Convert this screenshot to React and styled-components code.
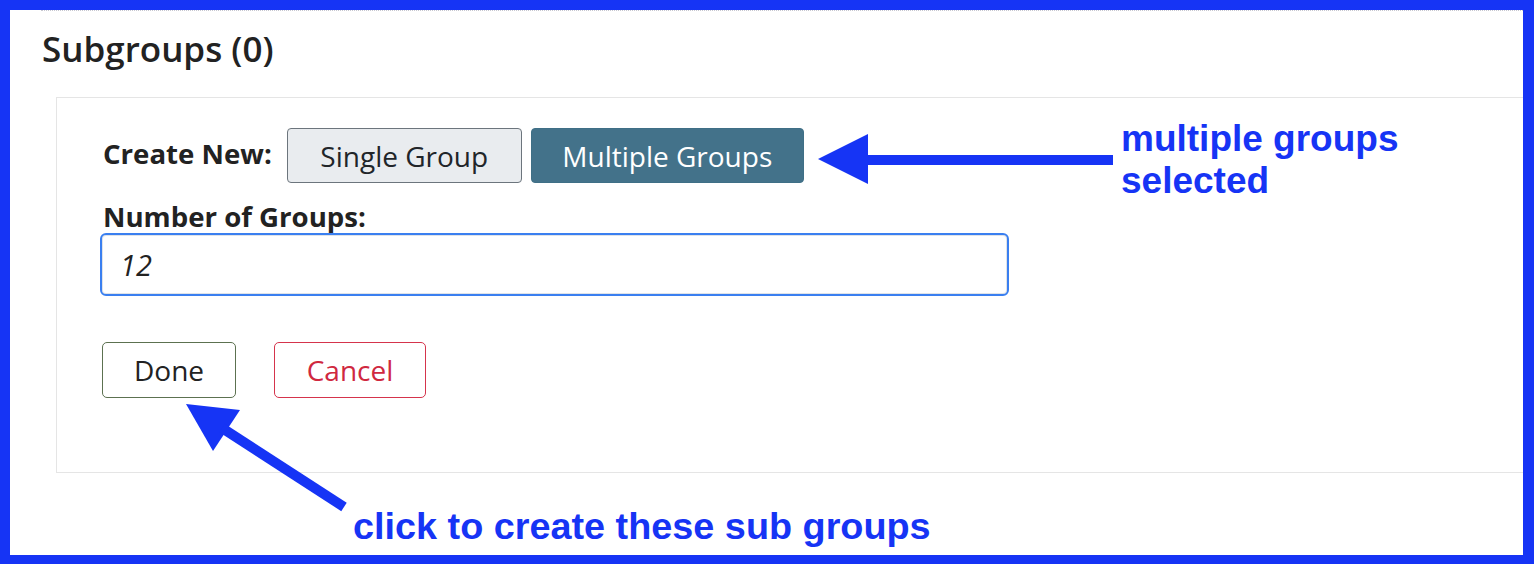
import React from "react";
import styled, { createGlobalStyle } from "styled-components";

const Global = createGlobalStyle`
  html, body { margin: 0; padding: 0; background: #fff; }
  body { font-family: "Open Sans", "Noto Sans", sans-serif; color: #212529; }
`;

const BLUE = "#1634f5";

const Frame = styled.div`
  position: relative;
  width: 1534px;
  height: 564px;
  box-sizing: border-box;
  border: 10px solid ${BLUE};
  border-right-width: 11px;
  border-bottom-width: 9px;
  overflow: hidden;
  background: #fff;
`;

const Inner = styled.div`
  margin-left: 31px;
  border-top: 1px dotted #c8c8d0;
  padding-left: 1px;
  display: flex;
  flex-direction: column;
`;

const Heading = styled.h2`
  margin: 18px 0 0 0;
  font-size: 35px;
  font-weight: 600;
  line-height: 40px;
  color: #222;
`;

const Panel = styled.div`
  margin: 28px 0 0 14px;
  border: 1px solid #e5e5e5;
  border-right: none;
  height: 376px;
  box-sizing: border-box;
  padding: 30px 0 0 46px;
  display: flex;
  flex-direction: column;
`;

const Row = styled.div`
  display: flex;
  align-items: center;
  gap: 9px;
`;

const Label = styled.span`
  font-size: 27.6px;
  font-weight: 700;
  line-height: 30px;
  color: #222;
  margin-right: 6px;
  margin-bottom: 6px;
`;

const ToggleButton = styled.button`
  width: ${(p) => p.$w}px;
  height: 55px;
  box-sizing: border-box;
  padding: 0;
  font-family: inherit;
  font-size: 28px;
  border-radius: 4px;
  border: 1px solid ${(p) => (p.$active ? "#3f6f86" : "#6c757d")};
  background: ${(p) => (p.$active ? "#43728a" : "#e9ecef")};
  color: ${(p) => (p.$active ? "#fff" : "#212529")};
`;

const FieldLabel = styled.label`
  margin-top: 18px;
  font-size: 27.6px;
  font-weight: 700;
  line-height: 30px;
  color: #222;
`;

const Input = styled.div`
  margin-top: 2px;
  margin-left: -3px;
  width: 909px;
  height: 63px;
  flex: none;
  box-sizing: border-box;
  border: 2px solid #3a7ff0;
  box-shadow: inset 0 0 0 1px #dfe3e8;
  border-radius: 6px;
  display: flex;
  align-items: center;
  padding-left: 18px;
  font-size: 29px;
  font-style: italic;
  color: #222;
`;

const Actions = styled.div`
  margin-top: 46px;
  margin-left: -1px;
  display: flex;
  gap: 38px;
`;

const ActionButton = styled.button`
  width: ${(p) => p.$w}px;
  height: 56px;
  box-sizing: border-box;
  padding: 0;
  background: #fff;
  border-radius: 5px;
  font-family: inherit;
  font-size: 28px;
  border: 1px solid ${(p) => p.$border};
  color: ${(p) => p.$color};
`;

const Overlay = styled.svg`
  position: absolute;
  left: -10px;
  top: -10px;
  pointer-events: none;
`;

const Note = styled.div`
  position: absolute;
  left: ${(p) => p.$x}px;
  top: ${(p) => p.$y}px;
  font-family: "Liberation Sans", Arial, sans-serif;
  font-weight: 700;
  font-size: ${(p) => p.$size}px;
  line-height: 42px;
  color: ${BLUE};
  white-space: nowrap;
`;

export default function App() {
  return (
    <>
      <Global />
      <Frame>
        <Inner>
          <Heading>Subgroups (0)</Heading>
          <Panel>
            <Row>
              <Label>Create New:</Label>
              <ToggleButton $w={235}>Single Group</ToggleButton>
              <ToggleButton $w={273} $active>Multiple Groups</ToggleButton>
            </Row>
            <FieldLabel>Number of Groups:</FieldLabel>
            <Input>12</Input>
            <Actions>
              <ActionButton $w={134} $border="#5c7150" $color="#222">Done</ActionButton>
              <ActionButton $w={152} $border="#d5344c" $color="#d0283f">Cancel</ActionButton>
            </Actions>
          </Panel>
        </Inner>
        <Overlay width="1534" height="564" viewBox="0 0 1534 564">
          <polygon points="818,159 868,134 868,184" fill={BLUE} />
          <rect x="866" y="155" width="247" height="10" fill={BLUE} />
          <polygon points="186,404 240,410 213,451" fill={BLUE} />
          <line x1="222" y1="428" x2="344" y2="507" stroke={BLUE} strokeWidth="10" />
        </Overlay>
        <Note $x={1111} $y={108} $size={37}>
          multiple groups
          <br />
          selected
        </Note>
        <Note $x={343} $y={495} $size={37.8}>click to create these sub groups</Note>
      </Frame>
    </>
  );
}
